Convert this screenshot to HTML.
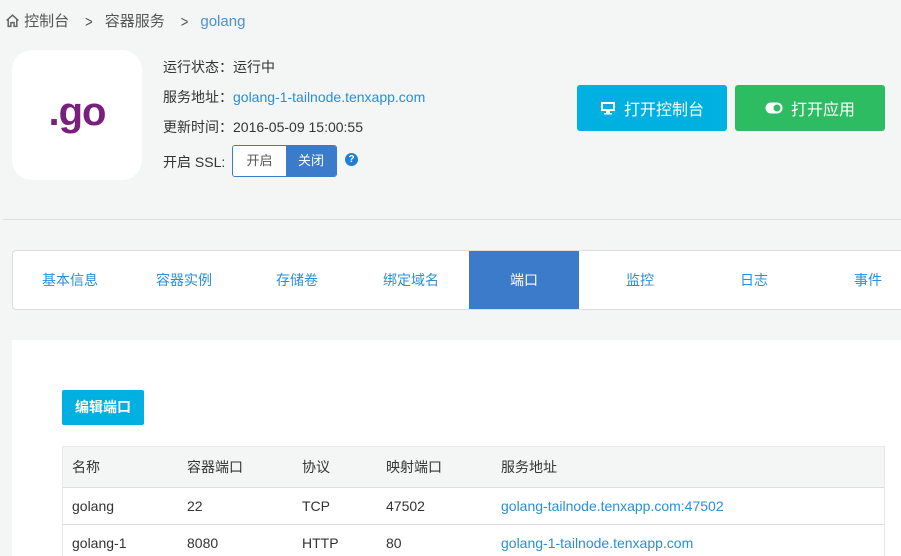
<!DOCTYPE html>
<html><head><meta charset="utf-8"><style>
*{margin:0;padding:0;box-sizing:border-box}
html,body{width:901px;height:556px;overflow:hidden}
body{background:#f4f5f5;font-family:"Liberation Sans","Noto Sans CJK SC",sans-serif;font-size:14px;color:#333;position:relative}
.a{position:absolute}
.bc{left:5px;top:10px;font-size:15px;color:#555;white-space:nowrap}
.logo{left:12px;top:50px;width:130px;height:130px;background:#fff;border-radius:20px;color:#7b1f7f;font-weight:bold;font-size:40px;text-align:center;line-height:124px;letter-spacing:-1px}
.info{left:163px;white-space:nowrap;font-size:14px}
.btn{height:46px;border-radius:3px;color:#fff;font-size:16px;display:flex;align-items:center;justify-content:center;gap:8px}
.tabs{left:12px;top:250px;width:900px;height:60px;background:#fff;border:1px solid #ddd;border-radius:4px;border-right:none}
.tab{position:absolute;top:0;height:58px;width:110px;line-height:58px;text-align:center;color:#2a8fd6;font-size:14px}
table{border-collapse:collapse;width:821px;font-size:14px}
td{height:37px;padding-left:9px;border-bottom:1px solid #ddd}
th{height:40px;text-align:left;font-weight:normal;padding-left:9px;background:#f4f5f5;border-bottom:1px solid #ddd}
.ch{display:inline-block;margin:0 12px 0 16px;color:#555;font-size:13px;transform:scaleY(1.2)}
</style></head><body>
<div class="a bc"><svg width="15" height="15" viewBox="0 0 14 14" style="vertical-align:-2px"><path d="M1.5 7 L7 2 L12.5 7 M3 6 V12.5 H5.5 V9 H8.5 V12.5 H11 V6" fill="none" stroke="#666" stroke-width="1.4"/></svg> 控制台<span class="ch">&gt;</span>容器服务<span class="ch">&gt;</span><span style="color:#4a90d6">golang</span></div>
<div class="a logo">.go</div>
<div class="a info" style="top:57px">运行状态：运行中</div>
<div class="a info" style="top:87px">服务地址：<span style="color:#2a8fd6">golang-1-tailnode.tenxapp.com</span></div>
<div class="a info" style="top:117px">更新时间：2016-05-09 15:00:55</div>
<div class="a info" style="top:152px">开启 SSL:</div>
<div class="a" style="left:232px;top:145px;width:105px;height:32px;border:1px solid #3b7bc9;border-radius:3px;display:flex;font-size:13px;overflow:hidden">
<div style="width:53px;line-height:30px;text-align:center;color:#555;background:#fff">开启</div>
<div style="flex:1;line-height:30px;text-align:center;color:#fff;background:#3b7bc9">关闭</div></div>
<div class="a" style="left:345px;top:153px;width:13px;height:13px;border-radius:50%;background:#1f7fd8;color:#fff;font-size:10px;font-weight:bold;text-align:center;line-height:13px">?</div>
<div class="a btn" style="left:577px;top:85px;width:150px;background:#00b0e0"><svg width="16" height="16" viewBox="0 0 16 16"><rect x="1" y="2" width="14" height="9" fill="#fff"/><rect x="3" y="4" width="10" height="5" fill="#00b0e0"/><rect x="6" y="11" width="4" height="2" fill="#fff"/><rect x="4" y="13" width="8" height="1.5" fill="#fff"/></svg>打开控制台</div>
<div class="a btn" style="left:735px;top:85px;width:150px;background:#2ebc63"><svg width="18" height="12" viewBox="0 0 18 12"><rect x="0.5" y="0.5" width="17" height="11" rx="5.5" fill="#fff"/><circle cx="12" cy="6" r="3.5" fill="#2ebc63"/></svg>打开应用</div>
<div class="a" style="left:3px;top:219px;width:898px;height:1px;background:#ddd"></div>
<div class="a tabs">
<div class="tab" style="left:2px">基本信息</div>
<div class="tab" style="left:116px">容器实例</div>
<div class="tab" style="left:229px">存储卷</div>
<div class="tab" style="left:343px">绑定域名</div>
<div class="tab" style="left:456px;background:#3b7bc9;color:#fff">端口</div>
<div class="tab" style="left:572px">监控</div>
<div class="tab" style="left:686px">日志</div>
<div class="tab" style="left:800px">事件</div>
</div>
<div class="a" style="left:12px;top:340px;width:889px;height:216px;background:#fff"></div>
<div class="a" style="left:62px;top:390px;width:82px;height:35px;background:#00b0e0;border-radius:2px;color:#fff;font-weight:bold;font-size:14px;line-height:35px;text-align:center">编辑端口</div>
<div class="a" style="left:62px;top:446px;border:1px solid #e8e8e8;border-bottom:none">
<table><tr><th style="width:115px">名称</th><th style="width:115px">容器端口</th><th style="width:84px">协议</th><th style="width:115px">映射端口</th><th>服务地址</th></tr>
<tr><td>golang</td><td>22</td><td>TCP</td><td>47502</td><td style="color:#2a8fd6">golang-tailnode.tenxapp.com:47502</td></tr>
<tr><td>golang-1</td><td>8080</td><td>HTTP</td><td>80</td><td style="color:#2a8fd6">golang-1-tailnode.tenxapp.com</td></tr></table></div>
</body></html>
